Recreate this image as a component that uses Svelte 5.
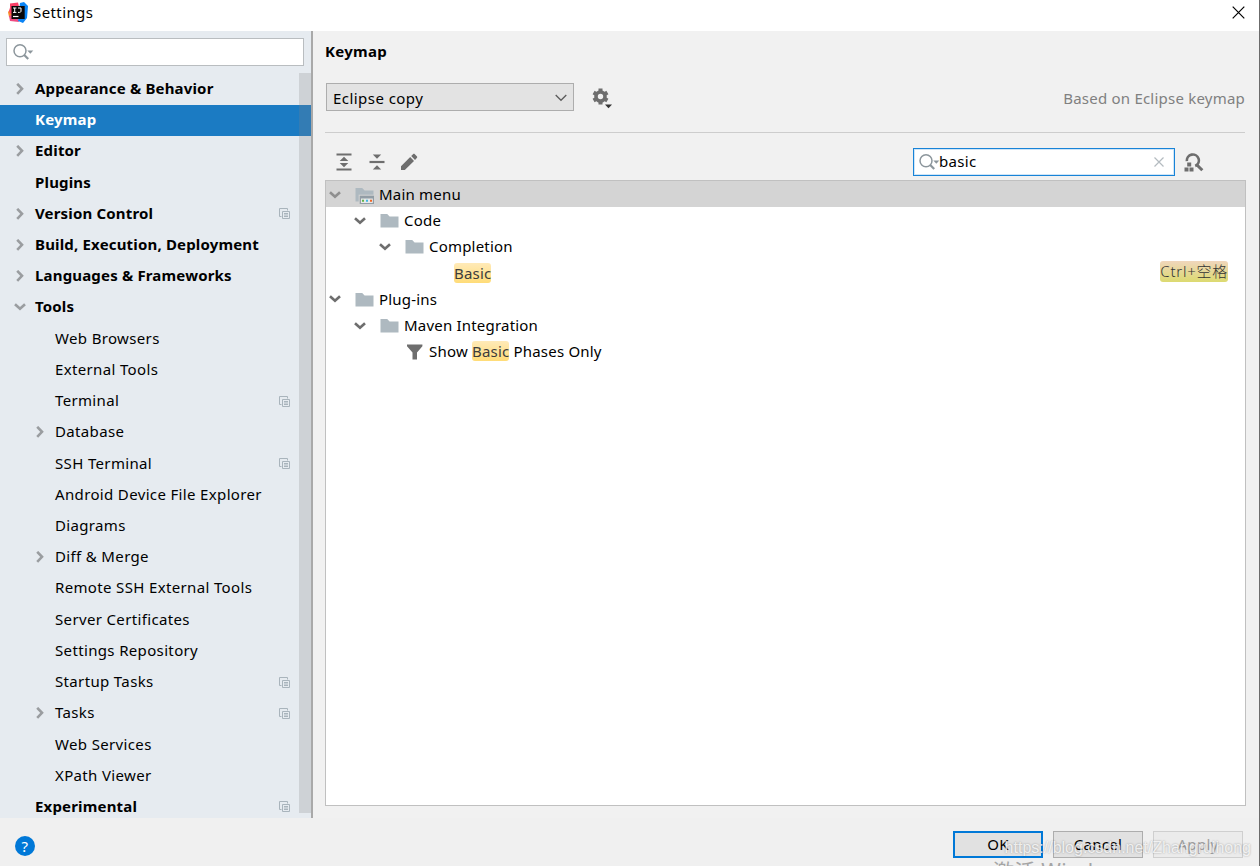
<script lang="ts">
  interface SettingsItem {
    label: string;
    level?: number;
    arrow?: 'open' | 'closed';
    project?: boolean;
  }

  interface TreeNode {
    parts: { text: string; hit?: boolean }[];
    depth: number;
    icon?: 'folder' | 'menu' | 'filter';
    open?: boolean;
    shortcut?: string;
  }

  const items: SettingsItem[] = [
    { label: 'Appearance & Behavior', arrow: 'closed' },
    { label: 'Keymap' },
    { label: 'Editor', arrow: 'closed' },
    { label: 'Plugins' },
    { label: 'Version Control', arrow: 'closed', project: true },
    { label: 'Build, Execution, Deployment', arrow: 'closed' },
    { label: 'Languages & Frameworks', arrow: 'closed' },
    { label: 'Tools', arrow: 'open' },
    { label: 'Web Browsers', level: 1 },
    { label: 'External Tools', level: 1 },
    { label: 'Terminal', level: 1, project: true },
    { label: 'Database', level: 1, arrow: 'closed' },
    { label: 'SSH Terminal', level: 1, project: true },
    { label: 'Android Device File Explorer', level: 1 },
    { label: 'Diagrams', level: 1 },
    { label: 'Diff & Merge', level: 1, arrow: 'closed' },
    { label: 'Remote SSH External Tools', level: 1 },
    { label: 'Server Certificates', level: 1 },
    { label: 'Settings Repository', level: 1 },
    { label: 'Startup Tasks', level: 1, project: true },
    { label: 'Tasks', level: 1, arrow: 'closed', project: true },
    { label: 'Web Services', level: 1 },
    { label: 'XPath Viewer', level: 1 },
    { label: 'Experimental', project: true },
  ];

  const nodes: TreeNode[] = [
    { parts: [{ text: 'Main menu' }], depth: 0, icon: 'menu', open: true },
    { parts: [{ text: 'Code' }], depth: 1, icon: 'folder', open: true },
    { parts: [{ text: 'Completion' }], depth: 2, icon: 'folder', open: true },
    { parts: [{ text: 'Basic', hit: true }], depth: 3, shortcut: 'Ctrl+空格' },
    { parts: [{ text: 'Plug-ins' }], depth: 0, icon: 'folder', open: true },
    { parts: [{ text: 'Maven Integration' }], depth: 1, icon: 'folder', open: true },
    { parts: [{ text: 'Show ' }, { text: 'Basic', hit: true }, { text: ' Phases Only' }], depth: 2, icon: 'filter' },
  ];

  let selected = $state('Keymap');
  let selectedNode = $state(0);
  let filter = $state('');
  let query = $state('basic');
</script>

{#snippet searchIcon()}
  <svg class="search-icon" width="22" height="18" viewBox="0 0 22 18" aria-hidden="true">
    <circle cx="7" cy="7.8" r="6" fill="none" stroke="#8c969c" stroke-width="1.5" />
    <path d="M11.2 12l4 4" stroke="#8c969c" stroke-width="2.2" />
    <path d="M14.3 7.5h6l-3 3.3z" fill="#8c969c" />
  </svg>
{/snippet}

{#snippet chevron(open: boolean)}
  <svg class="chevron" width="12" height="12" viewBox="0 0 12 12" aria-hidden="true">
    <path d={open ? 'M1 3.2l5 4.6 5-4.6' : 'M3.2 .8l4.8 5-4.8 5'} fill="none" stroke="currentColor" stroke-width="2.6" />
  </svg>
{/snippet}

<div class="window">
  <header class="titlebar">
    <svg width="20" height="21" viewBox="0 0 20 21" aria-hidden="true">
      <path d="M0 10l3-4 4 2-1 8-5-1z" fill="#f98b28" />
      <path d="M2 1.5l8-1 2 8-9 4-2-3 1-4z" fill="#fc3f67" />
      <path d="M1 14l7-3 3 9-9-1z" fill="#ee4b80" />
      <path d="M12 1l4-1 4 4-1 12-4 5-5-2z" fill="#0b84f5" />
      <path d="M3.5 4h13.2v13H3.5z" fill="#0a0708" />
      <path d="M5 6h3.4M6.7 6v4.500M5 10.400h3.400M10 6h3v3c0 1-.7 1.400-1.400 1.400H10" fill="none" stroke="#fff" stroke-width="1" />
      <path d="M5 14.500h5.500" stroke="#fff" stroke-width="1.200" />
    </svg>
    <span class="title">Settings</span>
    <button class="close" type="button" aria-label="Close">
      <svg width="13" height="13" viewBox="0 0 13 13"><path d="M.7.7l11.6 11.6M12.3.7L.7 12.3" stroke="#000" stroke-width="1.2" /></svg>
    </button>
  </header>

  <div class="body">
    <aside class="sidebar">
      <label class="filter">
        {@render searchIcon()}
        <input bind:value={filter} aria-label="Search settings" />
      </label>
      <nav class="items">
        {#each items as item (item.label)}
          <button
            type="button"
            class="item"
            class:child={item.level}
            class:selected={selected === item.label}
            onclick={() => (selected = item.label)}
          >
            <span class="arrow">
              {#if item.arrow}{@render chevron(item.arrow === 'open')}{/if}
            </span>
            <span class="label">{item.label}</span>
            {#if item.project}
              <svg class="project" width="11" height="11" viewBox="0 0 11 11" aria-hidden="true">
                <path d="M2.5 8.5h-2v-8h8v2" fill="none" stroke="#a9b4bc" />
                <path d="M3.5 3.5h7v7h-7z" fill="#e6ebf0" stroke="#a9b4bc" />
                <path d="M5 5.5h4M5 8.5h4M5 7h4" stroke="#a9b4bc" />
              </svg>
            {/if}
          </button>
        {/each}
        <div class="scrollbar"></div>
      </nav>
    </aside>

    <main class="content">
      <h1>Keymap</h1>

      <div class="scheme">
        <button class="select" type="button">
          <span>Eclipse copy</span>
          <svg width="12" height="8" viewBox="0 0 12 8"><path d="M.7 1l5.3 5.3L11.3 1" fill="none" stroke="#5c5c5c" stroke-width="1.3" /></svg>
        </button>
        <svg class="gear" width="21" height="21" viewBox="0 0 21 21" aria-hidden="true">
          <circle cx="8.5" cy="8.5" r="4.5" fill="none" stroke="#6e6e6e" stroke-width="3.6" />
          <path
            d="M8.5 .5v3.4M8.5 13.1v3.4M1.6 4.5l2.9 1.7M12.5 10.8l2.9 1.7M1.6 12.5l2.9-1.7M12.5 6.2l2.9-1.7"
            stroke="#6e6e6e"
            stroke-width="4"
          />
          <path d="M13 16.5h7l-3.5 3.8z" fill="#333" />
        </svg>
        <span class="based">Based on Eclipse keymap</span>
      </div>

      <div class="toolbar">
        <svg width="16" height="18" viewBox="0 0 16 18" aria-label="Expand all">
          <path d="M.5 1.5h15M.5 16.5h15" stroke="#6e6e6e" stroke-width="2.2" />
          <path d="M3.7 8L8 3.8 12.3 8zM3.7 10h8.6L8 14.2z" fill="#6e6e6e" />
        </svg>
        <svg width="16" height="18" viewBox="0 0 16 18" aria-label="Collapse all">
          <path d="M.5 9h15" stroke="#6e6e6e" stroke-width="2.2" />
          <path d="M3.8 1.5h8.4L8 5.8zM3.8 16.5L8 12.2l4.2 4.3z" fill="#6e6e6e" />
        </svg>
        <svg class="edit" width="18" height="18" viewBox="0 0 18 18" aria-label="Edit shortcut">
          <path d="M1 13.3l9.2-9.2 3.8 3.8L4.8 17H1zM11.2 3.1l1.8-1.8c.6-.6 1.2-.6 1.8 0l2 2c.6.6.6 1.2 0 1.8L15 6.9z" fill="#6e6e6e" />
        </svg>
        <label class="query">
          {@render searchIcon()}
          <input bind:value={query} aria-label="Search actions" />
          <svg width="10" height="10" viewBox="0 0 10 10"><path d="M.5.5l9 9M9.5.5l-9 9" stroke="#b4bbc0" stroke-width="1.2" /></svg>
        </label>
        <svg class="find" width="20" height="19" viewBox="0 0 20 19" aria-label="Find by shortcut">
          <path d="M2.9 8.2A6 6 0 1 1 11.2 13" fill="none" stroke="#6e6e6e" stroke-width="2.6" />
          <path d="M13 12l5.3 5.3" stroke="#6e6e6e" stroke-width="3" />
          <path d="M3.2 9.6h4v4h-4zM.5 14.6h4v4h-4zM5.5 14.6h4v4h-4z" fill="#6e6e6e" />
        </svg>
      </div>

      <div class="tree" role="tree">
        {#each nodes as node, i}
          <div
            class="node depth-{node.depth}"
            class:selected={selectedNode === i}
            role="treeitem"
            aria-selected={selectedNode === i}
            tabindex="0"
            onclick={() => (selectedNode = i)}
            onkeydown={(e) => e.key === 'Enter' && (selectedNode = i)}
          >
            <span class="toggle">
              {#if node.open}{@render chevron(true)}{/if}
            </span>
            <span class="icon">
              {#if node.icon === 'filter'}
                <svg width="19" height="18" viewBox="0 0 19 18"><path d="M2 1.5h15.4v1.8L12 9.5v7H7.5v-7L2 3.3z" fill="#6e6e6e" /></svg>
              {:else if node.icon}
                <svg width="19" height="18" viewBox="0 0 19 18">
                  <path d="M.5 2h6.7l2.4 2.5h8.9V15.5H.5z" fill="#aeb9c0" />
                  {#if node.icon === 'menu'}
                    <path d="M3.7 8.7H19V18H3.7z" fill="#d4d4d4" />
                    <path d="M4.7 9.7h14.3V18H4.7z" fill="#929da5" />
                    <path d="M6 12.5h11.8V17H6z" fill="#e6e8e9" />
                    <path d="M7 13.7h2v2H7z" fill="#62b543" />
                    <path d="M11 13.7h2v2h-2z" fill="#40b6e0" />
                    <path d="M15 13.7h2v2h-2z" fill="#f26522" />
                  {/if}
                </svg>
              {/if}
            </span>
            <span class="text">{#each node.parts as part}{#if part.hit}<mark>{part.text}</mark>{:else}{part.text}{/if}{/each}</span>
            {#if node.shortcut}<kbd>{node.shortcut}</kbd>{/if}
          </div>
        {/each}
      </div>
    </main>
  </div>

  <footer class="footer">
    <button class="help" type="button" aria-label="Help">?</button>
    <button class="btn primary" type="button">OK</button>
    <button class="btn" type="button">Cancel</button>
    <button class="btn" type="button" disabled>Apply</button>
  </footer>

  <div class="activation">激活 Windows</div>
  <div class="watermark">https://blog.csdn.net/Zhangruihong</div>
</div>

<style>
  :global(body) {
    margin: 0;
    overflow: hidden;
  }
  .window {
    position: relative;
    box-sizing: border-box;
    display: flex;
    flex-direction: column;
    width: 1260px;
    height: 866px;
    overflow: hidden;
    border-right: 1px solid #6b6b6b;
    background: #f0f0f0;
    color: #000;
    font: 15px/20px 'Noto Sans', 'Noto Sans CJK SC', sans-serif;
    letter-spacing: 0.3px;
  }
  svg {
    display: block;
    flex: none;
  }
  button {
    padding: 0;
    border: 0;
    background: none;
    color: inherit;
    font: inherit;
    letter-spacing: inherit;
  }
  input {
    flex: 1;
    min-width: 0;
    padding: 0 0 2px;
    border: 0;
    outline: 0;
    background: none;
    color: inherit;
    font: inherit;
    letter-spacing: inherit;
  }
  .titlebar {
    display: flex;
    align-items: center;
    height: 31px;
    box-sizing: border-box;
    padding: 0 14px 6px 8px;
    background: #fff;
  }
  .title {
    margin-left: 5px;
    padding-bottom: 2px;
    letter-spacing: 0.4px;
  }
  .close {
    margin-left: auto;
  }
  .body {
    display: flex;
    height: 787px;
  }

  .sidebar {
    display: flex;
    flex-direction: column;
    box-sizing: border-box;
    width: 313px;
    padding-top: 7px;
    border-right: 2px solid #a9a9a9;
    background: #e6ebf0;
  }
  .filter {
    display: flex;
    align-items: center;
    box-sizing: border-box;
    width: 298px;
    height: 28px;
    margin-left: 6px;
    padding-left: 6px;
    border: 1px solid #b9bdc0;
    background: #fff;
  }
  .items {
    position: relative;
    flex: 1;
    padding-top: 7.3px;
    overflow: hidden;
  }
  .item {
    display: flex;
    align-items: center;
    width: 100%;
    height: 31.22px;
    padding: 0 21px 0 13.5px;
    font-weight: 700;
    letter-spacing: 0.17px;
    text-align: left;
  }
  .item.child {
    padding-left: 33.5px;
    font-weight: 400;
    letter-spacing: 0.35px;
  }
  .item.selected {
    background: #1b7bc3;
    color: #fff;
  }
  .arrow {
    width: 21.5px;
    color: #9a9da0;
  }
  .label {
    padding-bottom: 2px;
    white-space: nowrap;
  }
  .project {
    margin-left: auto;
  }
  .scrollbar {
    position: absolute;
    top: 7px;
    right: 0;
    width: 12px;
    height: 740px;
    background: rgba(130, 130, 135, 0.24);
  }

  .content {
    display: flex;
    flex: 1;
    flex-direction: column;
    padding: 10px 14px 12px 12px;
    background: #f1f1f1;
  }
  h1 {
    margin: 0;
    font-size: 15px;
    line-height: 20px;
  }
  .scheme {
    display: flex;
    align-items: center;
    height: 28px;
    margin-top: 22px;
    padding-bottom: 21px;
    border-bottom: 1px solid #cdcdcd;
  }
  .select {
    display: flex;
    align-items: center;
    justify-content: space-between;
    box-sizing: border-box;
    width: 248px;
    height: 28px;
    margin-left: 1px;
    padding: 0 6px;
    border: 1px solid #adadad;
    background: #e3e3e3;
    letter-spacing: 0.45px;
  }
  .select span {
    padding-top: 1px;
  }
  .select svg {
    margin-top: 2px;
  }
  .gear {
    margin: 2px 0 0 18px;
  }
  .based {
    margin-left: auto;
    padding-top: 1px;
    color: #808080;
    letter-spacing: 0.22px;
  }
  .toolbar {
    display: flex;
    align-items: center;
    gap: 17px;
    height: 28px;
    padding: 15px 41px 4px 11px;
  }
  .edit {
    margin-left: -2px;
  }
  .query {
    display: flex;
    align-items: center;
    box-sizing: border-box;
    width: 262px;
    height: 28px;
    margin-left: auto;
    padding: 0 10px 0 5px;
    border: 1px solid #1883d7;
    box-shadow: inset 0 0 0 1px #cfe5f7;
    background: #fff;
  }
  .query .search-icon {
    margin-right: -2px;
  }
  .find {
    margin-left: -8px;
  }
  .tree {
    flex: 1;
    margin-right: -1px;
    border: 1px solid #c0c0c0;
    background: #fff;
  }
  .node {
    display: flex;
    align-items: center;
    height: 26.2px;
    padding-right: 17px;
    outline: 0;
    letter-spacing: 0.25px;
    white-space: pre;
  }
  .node.selected {
    background: #d4d4d4;
  }
  .depth-0 {
    padding-left: 3px;
  }
  .depth-1 {
    padding-left: 28px;
  }
  .depth-2 {
    padding-left: 53px;
  }
  .depth-3 {
    padding-left: 78px;
  }
  .toggle {
    width: 26px;
    padding-top: 1px;
    color: #6e6e6e;
  }
  .selected .toggle {
    color: #8f8f8f;
  }
  .icon {
    width: 24px;
    padding-top: 2px;
  }
  .text {
    letter-spacing: 0.2px;
  }
  mark {
    border-radius: 3px;
    background: linear-gradient(#ffeab8, #ffdc78);
    color: #3c3c3c;
  }
  kbd {
    margin: -2px 0 0 auto;
    border-radius: 3px;
    background: linear-gradient(#f0d6bc, #dcda70);
    color: #333;
    font: 300 15px/21px 'Noto Sans', 'Noto Sans CJK SC', sans-serif;
    letter-spacing: 0.75px;
  }

  .footer {
    display: flex;
    align-items: flex-start;
    gap: 10px;
    flex: 1;
    padding: 13px 16px 0 15px;
  }
  .help {
    width: 20px;
    height: 20px;
    margin: 5px auto 0 0;
    border-radius: 50%;
    background: #0078d7;
    color: #fff;
    font-size: 15px;
    line-height: 20px;
  }
  .btn {
    box-sizing: border-box;
    width: 90px;
    height: 27px;
    padding-bottom: 2px;
    border: 1px solid #adadad;
    background: #e1e1e1;
  }
  .btn.primary {
    border: 2px solid #0078d7;
  }
  .btn:disabled {
    border-color: #cfcfcf;
    background: #ebebeb;
    color: #a0a0a0;
  }
  .activation {
    position: absolute;
    top: 857px;
    left: 993px;
    color: #a5a5a5;
    font-size: 21px;
    line-height: 28px;
    white-space: nowrap;
    pointer-events: none;
  }
  .watermark {
    position: absolute;
    top: 838px;
    right: 8px;
    color: rgba(255, 255, 255, 0.8);
    font: 16px/20px 'Liberation Sans', sans-serif;
    letter-spacing: 0;
    text-shadow: 0 0 2px rgba(0, 0, 0, 0.35);
    white-space: nowrap;
    pointer-events: none;
  }
</style>
